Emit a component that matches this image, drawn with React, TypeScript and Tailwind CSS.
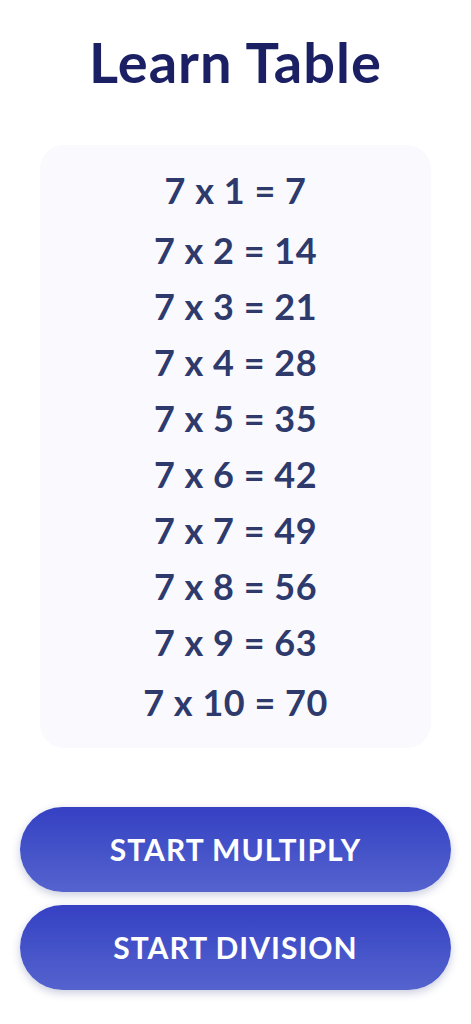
import React from 'react';

const FACTOR = 7;

const TableRow = ({ n, className = '' }: { n: number; className?: string }) => (
    <div className={`h-[56px] flex items-center justify-center text-[36px] font-bold tracking-[0.5px] text-[#2e3a6c] ${className}`}>
        {FACTOR} x {n} = {FACTOR * n}
    </div>
);

const StartButton = ({ label }: { label: string }) => (
    <button className="w-full h-[85px] rounded-full bg-gradient-to-b from-[#3540c3] to-[#5563ce] text-white text-[30px] font-bold tracking-[1px] shadow-[0_3px_8px_rgba(40,50,120,0.25)]">
        {label}
    </button>
);

const App = () => {
    const rows = Array.from({ length: 10 }, (_, i) => i + 1);

    return (
        <div className="min-h-screen bg-white font-['Lato','Noto_Sans',sans-serif]">
            <h1 className="pt-[30px] text-center text-[56px] leading-[64px] font-bold tracking-[1px] text-[#1b1f63]">
                Learn Table
            </h1>

            {/* multiplication card */}
            <div className="mx-10 mt-[51px] rounded-3xl bg-[#f9f9fe] pt-[17px] pb-[18px]">
                {rows.map(n => (
                    <TableRow
                        key={n}
                        n={n}
                        className={n === 2 || n === 10 ? 'mt-1' : ''}
                    />
                ))}
            </div>

            <div className="mx-5 mt-[59px] flex flex-col gap-[13px]">
                <StartButton label="START MULTIPLY" />
                <StartButton label="START DIVISION" />
            </div>
        </div>
    );
};

export default App;
